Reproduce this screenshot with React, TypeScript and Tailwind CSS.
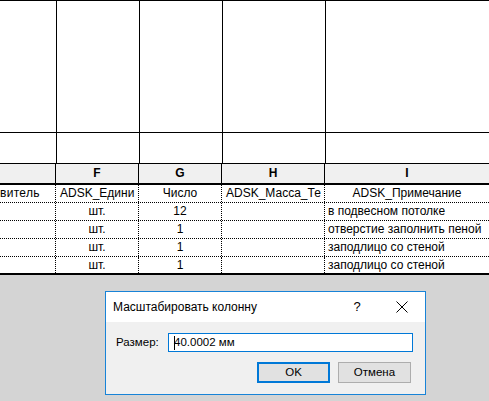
import React from "react";

const topCols = ["w-[57px]", "w-[83px]", "w-[83px]", "w-[103px]"];
const lowCols = ["w-[56px]", "w-[83px]", "w-[83px]", "w-[103px]"];

function TopRow({ h, top }: { h: string; top?: boolean }) {
  return (
    <div className={`flex ${h} bg-white border-b border-black ${top ? "border-t" : ""}`}>
      {topCols.map((w, i) => (
        <div key={i} className={`${w} shrink-0 border-r border-black`} />
      ))}
      <div className="flex-1" />
    </div>
  );
}

type Cell = { t: string; align: "l" | "c" };

function DataRow({ cells, last }: { cells: Cell[]; last?: boolean }) {
  return (
    <div
      className={`flex h-[18px] bg-white ${last ? "border-b-2 border-black border-solid" : "border-b border-dotted border-black"}`}
    >
      {cells.map((c, i) => (
        <div
          key={i}
          className={`${i < 4 ? lowCols[i] + " shrink-0 border-r border-dotted border-black" : "flex-1"} overflow-hidden whitespace-nowrap leading-[17px] ${
            c.align === "c" ? "text-center" : "text-left pl-[3px]"
          }`}
        >
          {c.t}
        </div>
      ))}
    </div>
  );
}

export default function App() {
  const rows: Cell[][] = [
    [
      { t: "", align: "c" },
      { t: "шт.", align: "c" },
      { t: "12", align: "c" },
      { t: "", align: "c" },
      { t: "в подвесном потолке", align: "l" },
    ],
    [
      { t: "", align: "c" },
      { t: "шт.", align: "c" },
      { t: "1", align: "c" },
      { t: "", align: "c" },
      { t: "отверстие заполнить пеной", align: "l" },
    ],
    [
      { t: "", align: "c" },
      { t: "шт.", align: "c" },
      { t: "1", align: "c" },
      { t: "", align: "c" },
      { t: "заподлицо со стеной", align: "l" },
    ],
    [
      { t: "", align: "c" },
      { t: "шт.", align: "c" },
      { t: "1", align: "c" },
      { t: "", align: "c" },
      { t: "заподлицо со стеной", align: "l" },
    ],
  ];

  return (
    <div
      className="relative w-[489px] h-[401px] overflow-hidden bg-[#d4d4d4] text-[12px] text-black"
      style={{ fontFamily: '"Liberation Sans", Arial, sans-serif' }}
    >
      <TopRow h="h-[133px]" top />
      <TopRow h="h-[31px]" />

      {/* column letters header */}
      <div className="flex h-[21px] bg-[#f0f0f0] border-b-2 border-black font-bold">
        {["", "F", "G", "H"].map((l, i) => (
          <div key={i} className={`${lowCols[i]} shrink-0 border-r border-black text-center leading-[19px]`}>
            {l}
          </div>
        ))}
        <div className="flex-1 text-center leading-[19px]">I</div>
      </div>

      {/* column names */}
      <div className="flex h-[18px] bg-white border-b border-dotted border-black">
        <div className="w-[56px] shrink-0 border-r border-dotted border-black overflow-hidden whitespace-nowrap leading-[17px] tracking-[0.3px]">
          витель
        </div>
        <div className="w-[83px] shrink-0 border-r border-dotted border-black overflow-hidden whitespace-nowrap leading-[17px] pl-[4px]">
          ADSK_Едини
        </div>
        <div className="w-[83px] shrink-0 border-r border-dotted border-black text-center leading-[17px]">
          Число
        </div>
        <div className="w-[103px] shrink-0 border-r border-dotted border-black overflow-hidden whitespace-nowrap leading-[17px] pl-[4px]">
          ADSK_Масса_Те
        </div>
        <div className="flex-1 text-center leading-[17px] whitespace-nowrap">ADSK_Примечание</div>
      </div>

      {rows.map((r, i) => (
        <DataRow key={i} cells={r} last={i === rows.length - 1} />
      ))}

      {/* dialog */}
      <div
        className="absolute left-[105px] top-[291px] w-[321px] h-[104px] border border-[#1883d7] bg-[#f0f0f0] flex flex-col text-[11.5px] text-black"
        style={{ fontFamily: '"Liberation Sans", Arial, sans-serif' }}
      >
        <div className="h-[30px] bg-white flex items-center pl-[7px] shrink-0">
          <div className="flex-1 text-[12px]">Масштабировать колонну</div>
          <div className="w-[12px] text-center mr-[33px] text-[13px]">?</div>
          <svg width="12" height="12" viewBox="0 0 12 12" className="mr-[17px]">
            <path d="M0.5 0.5 L11.5 11.5 M11.5 0.5 L0.5 11.5" stroke="#000" strokeWidth="1" fill="none" />
          </svg>
        </div>
        <div className="flex-1 flex flex-col pl-[10px] pr-[12px] pt-[11px]">
          <div className="flex items-center h-[19px]">
            <div className="w-[52px] shrink-0">Размер:</div>
            <div className="relative flex-1 h-[19px] border border-[#0078d7] bg-white flex items-center pl-[5px]">
              <span className="absolute left-[5px] top-[2px] w-px h-[14px] bg-black" />
              <span>40.0002 мм</span>
            </div>
          </div>
          <div className="flex justify-end gap-[8px] mt-[10px] pr-[2px]">
            <div className="w-[73px] h-[21px] border-2 border-[#0078d7] bg-[#e1e1e1] flex items-center justify-center">
              OK
            </div>
            <div className="w-[73px] h-[21px] border border-[#adadad] bg-[#e1e1e1] flex items-center justify-center">
              Отмена
            </div>
          </div>
        </div>
      </div>
    </div>
  );
}
